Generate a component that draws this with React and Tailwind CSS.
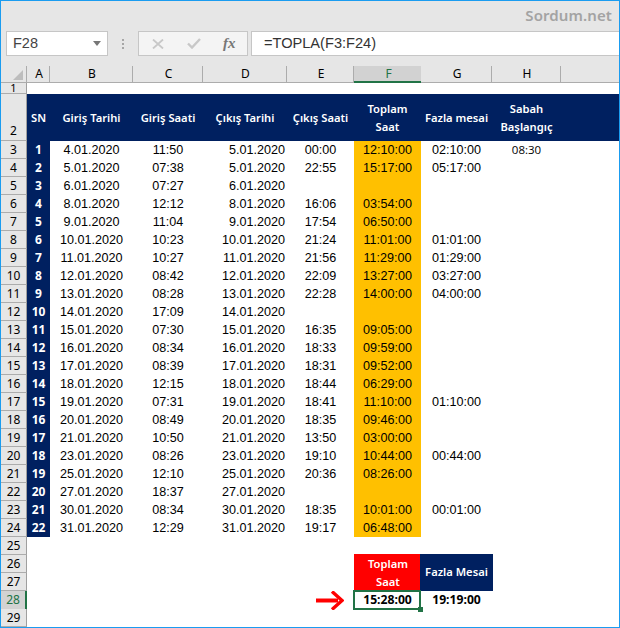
import React from "react";

const columns = "grid grid-cols-[26px_23px_83px_70px_84px_67px_67px_71px_69px_1fr]";

const rows = [
  ["4.01.2020", "11:50", "5.01.2020", "00:00", "12:10:00", "02:10:00", "08:30"],
  ["5.01.2020", "07:38", "5.01.2020", "22:55", "15:17:00", "05:17:00"],
  ["6.01.2020", "07:27", "6.01.2020"],
  ["8.01.2020", "12:12", "8.01.2020", "16:06", "03:54:00"],
  ["9.01.2020", "11:04", "9.01.2020", "17:54", "06:50:00"],
  ["10.01.2020", "10:23", "10.01.2020", "21:24", "11:01:00", "01:01:00"],
  ["11.01.2020", "10:27", "11.01.2020", "21:56", "11:29:00", "01:29:00"],
  ["12.01.2020", "08:42", "12.01.2020", "22:09", "13:27:00", "03:27:00"],
  ["13.01.2020", "08:28", "13.01.2020", "22:28", "14:00:00", "04:00:00"],
  ["14.01.2020", "17:09", "14.01.2020"],
  ["15.01.2020", "07:30", "15.01.2020", "16:35", "09:05:00"],
  ["16.01.2020", "08:34", "16.01.2020", "18:33", "09:59:00"],
  ["17.01.2020", "08:39", "17.01.2020", "18:31", "09:52:00"],
  ["18.01.2020", "12:15", "18.01.2020", "18:44", "06:29:00"],
  ["19.01.2020", "07:31", "19.01.2020", "18:41", "11:10:00", "01:10:00"],
  ["20.01.2020", "08:49", "20.01.2020", "18:35", "09:46:00"],
  ["21.01.2020", "10:50", "21.01.2020", "13:50", "03:00:00"],
  ["23.01.2020", "08:26", "23.01.2020", "19:10", "10:44:00", "00:44:00"],
  ["25.01.2020", "12:10", "25.01.2020", "20:36", "08:26:00"],
  ["27.01.2020", "18:37", "27.01.2020"],
  ["30.01.2020", "08:34", "30.01.2020", "18:35", "10:01:00", "00:01:00"],
  ["31.01.2020", "12:29", "31.01.2020", "19:17", "06:48:00"],
];

const RowHead = ({ n, active }) => (
  <div
    className={`flex items-center justify-center h-full border-b border-b-[#acacac] font-['Noto_Sans',sans-serif] text-[12px] leading-none ${
      active
        ? "bg-[#d2d2d2] text-[#217346] border-r-2 border-r-[#217346]"
        : "bg-[#e6e6e6] text-black border-r border-r-[#9f9f9f]"
    }`}
  >
    {n}
  </div>
);

const ColHead = ({ label, active, last }) => (
  <div
    className={`flex items-center justify-center pl-[2px] h-[17px] font-['Noto_Sans',sans-serif] text-[12px] leading-none border-b ${
      active
        ? "bg-[#d2d2d2] text-[#217346] border-b-2 border-b-[#217346]"
        : "text-black border-b-[#acacac] border-r border-r-[#acacac]"
    } ${last ? "border-r-0" : ""}`}
  >
    {label}
  </div>
);

const Head = ({ children }) => (
  <div className="flex items-center justify-center text-center font-['Noto_Sans',sans-serif] text-[11.2px] leading-[18px] font-semibold text-white whitespace-nowrap">
    {children}
  </div>
);

export default function App() {
  return (
    <div className="w-[620px] h-[628px] overflow-hidden border border-[#1a9cf0] bg-[#e6e6e6] font-['Liberation_Sans',sans-serif]">
      {/* top strip with watermark */}
      <div className="h-[30px] flex justify-end items-start pt-[3px] pr-[7px]">
        <span className="font-['Noto_Sans',sans-serif] font-semibold text-[15px] tracking-[0.1px] text-[#a3a3a3]">
          Sordum.net
        </span>
      </div>

      {/* formula bar */}
      <div className="h-[25px] flex pl-[5px]">
        <div className="w-[102px] flex items-center justify-between pl-[6px] pr-[5px] bg-white border border-[#c6c6c6] text-[14.5px] text-[#444444]">
          F28
          <span className="w-0 h-0 border-x-[4px] border-x-transparent border-t-[5px] border-t-[#777777] mr-[1px]"></span>
        </div>
        <div className="w-[30px] flex flex-col items-center justify-center gap-[2px] pr-[1px]">
          <span className="w-[2px] h-[2px] bg-[#a6a6a6]"></span>
          <span className="w-[2px] h-[2px] bg-[#a6a6a6]"></span>
          <span className="w-[2px] h-[2px] bg-[#a6a6a6]"></span>
        </div>
        <div className="w-[110px] flex items-center bg-[#f4f4f4] border border-[#c6c6c6] pl-[13px]">
          <svg width="12" height="10" viewBox="0 0 12 10" fill="none" stroke="#c8c8c8" strokeWidth="1.8">
            <path d="M1 0.5 L11 9.5 M11 0.5 L1 9.5" />
          </svg>
          <svg className="ml-[23px]" width="14" height="11" viewBox="0 0 14 11" fill="none" stroke="#c8c8c8" strokeWidth="2.4">
            <path d="M1 5.5 L5 9.5 L13 1" />
          </svg>
          <span className="ml-[22px] font-['Liberation_Serif',serif] italic font-bold text-[15px] leading-none text-[#777777]">
            fx
          </span>
        </div>
        <div className="flex-1 ml-[3px] flex items-center pl-[12px] bg-white border-y border-l border-[#c6c6c6] text-[14.6px] text-[#333333]">
          =TOPLA(F3:F24)
        </div>
      </div>
      <div className="h-[10px]"></div>

      {/* column headers */}
      <div className={columns}>
        <div className="h-[17px] flex items-end justify-end pr-[3px] pb-[2px] border-r border-r-[#acacac] border-b border-b-[#acacac]">
          <span className="w-0 h-0 border-l-[10px] border-l-transparent border-b-[10px] border-b-[#bdbdbd]"></span>
        </div>
        {["A", "B", "C", "D", "E"].map((c) => (
          <ColHead key={c} label={c} />
        ))}
        <ColHead label="F" active />
        <ColHead label="G" />
        <ColHead label="H" />
        <ColHead label="" last />
      </div>

      {/* sheet */}
      <div className="relative bg-white">
        <div className={`${columns} h-[11px]`}>
          <div className="flex justify-center h-full bg-[#e6e6e6] border-r border-r-[#9f9f9f] border-b border-b-[#acacac] font-['Noto_Sans',sans-serif] text-[11px] leading-[9px]">
            1
          </div>
        </div>

        <div className={`${columns} h-[47px]`}>
          <div className="flex items-end justify-center pb-[1px] bg-[#e6e6e6] border-r border-r-[#9f9f9f] border-b border-b-[#acacac] font-['Noto_Sans',sans-serif] text-[12px] leading-[16px]">
            2
          </div>
          <div className="col-span-9 grid grid-cols-subgrid bg-[#002060]">
            <Head>SN</Head>
            <Head>Giriş Tarihi</Head>
            <Head>Giriş Saati</Head>
            <Head>Çıkış Tarihi</Head>
            <Head>Çıkış Saati</Head>
            <Head>
              Toplam
              <br />
              Saat
            </Head>
            <Head>Fazla mesai</Head>
            <Head>
              Sabah
              <br />
              Başlangıç
            </Head>
            <div></div>
          </div>
        </div>

        {rows.map((r, i) => (
          <div key={i} className={`${columns} h-[18px] text-[12.6px] leading-[18px] text-black`}>
            <RowHead n={i + 3} />
            <div className="bg-[#002060] text-white text-center font-['Noto_Sans',sans-serif] font-bold text-[12px]">
              {i + 1}
            </div>
            <div className="text-center">{r[0]}</div>
            <div className="text-center">{r[1]}</div>
            <div className="text-right pr-[2px]">{r[2]}</div>
            <div className="text-center">{r[3]}</div>
            <div className="text-center bg-[#ffc000]">{r[4]}</div>
            <div className="text-center">{r[5]}</div>
            <div className="text-center font-['Open_Sans',sans-serif] text-[11.5px]">{r[6]}</div>
          </div>
        ))}

        <div className={`${columns} h-[18px]`}>
          <RowHead n={25} />
        </div>

        <div className={`${columns} h-[36px]`}>
          <div className="flex flex-col">
            <RowHead n={26} />
            <RowHead n={27} />
          </div>
          <div className="col-start-7 -mt-[1px] -mr-[1px] flex items-center justify-center text-center bg-[#ff0000] font-['Noto_Sans',sans-serif] text-[11.2px] leading-[18px] font-semibold text-white">
            <span>
              Toplam
              <br />
              Saat
            </span>
          </div>
          <div className="-mt-[1px] -ml-[1px] -mr-[1px] flex items-center justify-center bg-[#002060] text-white font-['Noto_Sans',sans-serif] text-[11.2px] font-semibold whitespace-nowrap">
            Fazla Mesai
          </div>
        </div>

        <div className={`${columns} h-[18px]`}>
          <RowHead n={28} active />
          <div className="col-span-5 flex justify-end items-center pr-[10px]">
            <svg width="28" height="19" viewBox="0 0 28 19" fill="none">
              <path d="M0 7.5 H22 V11.5 H0 Z" fill="#ff0000" />
              <path d="M16 0.5 L26 9.5 L16 18.5" stroke="#ff0000" strokeWidth="3.4" />
            </svg>
          </div>
          <div className="relative flex items-center justify-center font-['Noto_Sans',sans-serif] font-bold text-[12.2px]">
            15:28:00
            <div className="absolute -left-[1px] -top-[1px] right-0 bottom-0 border-2 border-[#217346]"></div>
            <div className="absolute -right-[2px] -bottom-[2px] w-[5px] h-[5px] bg-[#217346]"></div>
          </div>
          <div className="flex items-center justify-center font-['Noto_Sans',sans-serif] font-bold text-[12.2px]">
            19:19:00
          </div>
        </div>

        <div className={`${columns} h-[18px]`}>
          <RowHead n={29} />
        </div>
      </div>
    </div>
  );
}
